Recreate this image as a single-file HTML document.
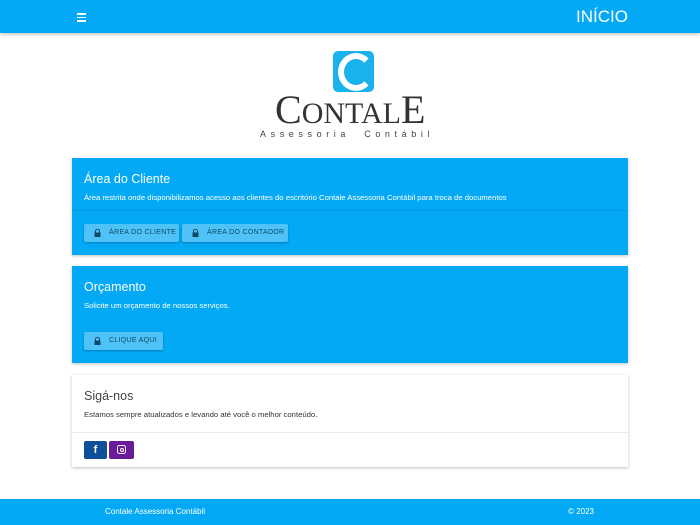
<!DOCTYPE html>
<html><head><meta charset="utf-8"><style>
*{box-sizing:border-box;margin:0;padding:0}
body{width:700px;height:525px;background:#fff;font-family:"Liberation Sans",sans-serif;position:relative;overflow:hidden}
.hdr{position:absolute;left:0;top:0;width:700px;height:33px;background:#03a9f4;box-shadow:0 2px 3px rgba(0,0,0,.2)}
.ham{position:absolute;left:77px;top:13px;width:9px}
.ham i{display:block;height:1.5px;background:#fff;margin-bottom:2px}
.hdr .t{position:absolute;right:72px;top:7px;color:#fff;font-size:17px}
.card{position:absolute;left:72px;width:556px;box-shadow:0 1px 3px rgba(0,0,0,.25)}
.blue{background:#03a9f4;color:#fff}
.card h2{font-weight:normal;font-size:12.5px;position:absolute;left:12px;white-space:nowrap}
.card p{font-size:7.7px;position:absolute;left:12px;white-space:nowrap}
.div{position:absolute;left:0;right:0;height:1px;background:rgba(0,0,0,.08)}
.btn{position:absolute;height:18px;background:#4fc3f7;color:#0a4a66;font-size:7px;letter-spacing:.3px;box-shadow:0 1px 2px rgba(0,0,0,.25);padding-left:25px;line-height:18px;border-radius:2px;white-space:nowrap}
.lock{position:absolute;left:10px;top:5px;width:7px;height:8px}
.foot{position:absolute;left:0;top:499px;width:700px;height:26px;background:#03a9f4;color:#fff;font-size:8px}
</style></head><body>
<div class="hdr"><div class="ham"><i></i><i></i><i></i></div><div class="t">INÍCIO</div></div>

<div style="position:absolute;left:333px;top:51px;width:41px;height:41px;background:#1ab2ec;border-radius:5px"></div>
<div style="position:absolute;left:338px;top:53px;width:36px;height:38px;border-radius:50%;border:6px solid #fff;border-right-color:transparent"></div>
<div style="position:absolute;left:275px;top:86px;font-family:'Liberation Serif',serif;font-size:40px;color:#333;white-space:nowrap"><span>C</span><span style="font-size:30px">ONTAL</span><span>E</span></div>
<div style="position:absolute;left:260px;top:129px;font-size:9px;color:#444;letter-spacing:4.6px;white-space:nowrap">Assessoria&nbsp; Contábil</div>

<div class="card blue" style="top:158px;height:97px">
<h2 style="top:14px">Área do Cliente</h2>
<p style="top:35px">Área restrita onde disponibilizamos acesso aos clientes do escritório Contale Assessoria Contábil para troca de documentos</p>
<div class="div" style="top:52px"></div>
<div class="btn" style="left:12px;top:66px;width:95px"><svg class="lock" viewBox="0 0 7 8"><path d="M1.5 3.5V2.3a2 2 0 014 0v1.2" stroke="#0a4a66" fill="none" stroke-width="1"/><rect x="0.5" y="3.5" width="6" height="4.5" fill="#0a4a66"/></svg>ÁREA DO CLIENTE</div>
<div class="btn" style="left:110px;top:66px;width:106px"><svg class="lock" viewBox="0 0 7 8"><path d="M1.5 3.5V2.3a2 2 0 014 0v1.2" stroke="#0a4a66" fill="none" stroke-width="1"/><rect x="0.5" y="3.5" width="6" height="4.5" fill="#0a4a66"/></svg>ÁREA DO CONTADOR</div>
</div>

<div class="card blue" style="top:266px;height:97px">
<h2 style="top:14px">Orçamento</h2>
<p style="top:35px">Solicite um orçamento de nossos serviços.</p>
<div class="btn" style="left:12px;top:66px;width:79px"><svg class="lock" viewBox="0 0 7 8"><path d="M1.5 3.5V2.3a2 2 0 014 0v1.2" stroke="#0a4a66" fill="none" stroke-width="1"/><rect x="0.5" y="3.5" width="6" height="4.5" fill="#0a4a66"/></svg>CLIQUE AQUI</div>
</div>

<div class="card" style="top:375px;height:92px;background:#fff;color:#333">
<h2 style="top:14px;color:#444">Sigá-nos</h2>
<p style="top:35px">Estamos sempre atualizados e levando até você o melhor conteúdo.</p>
<div class="div" style="top:57px"></div>
<div style="position:absolute;left:12px;top:66px;width:23px;height:18px;background:#0d4f9a;border-radius:2px;color:#fff;font-weight:bold;font-size:11px;text-align:center;line-height:18px">f</div>
<div style="position:absolute;left:37px;top:66px;width:25px;height:18px;background:#6a1b9a;border-radius:2px"><div style="position:absolute;left:8px;top:4px;width:9px;height:9px;border:1.3px solid #fff;border-radius:2.5px"></div><div style="position:absolute;left:10.5px;top:6.5px;width:4px;height:4px;border:1.2px solid #fff;border-radius:50%"></div></div>
</div>

<div class="foot"><span style="position:absolute;left:105px;top:8px">Contale Assessoria Contábil</span><span style="position:absolute;right:106px;top:8px">© 2023</span></div>
</body></html>
